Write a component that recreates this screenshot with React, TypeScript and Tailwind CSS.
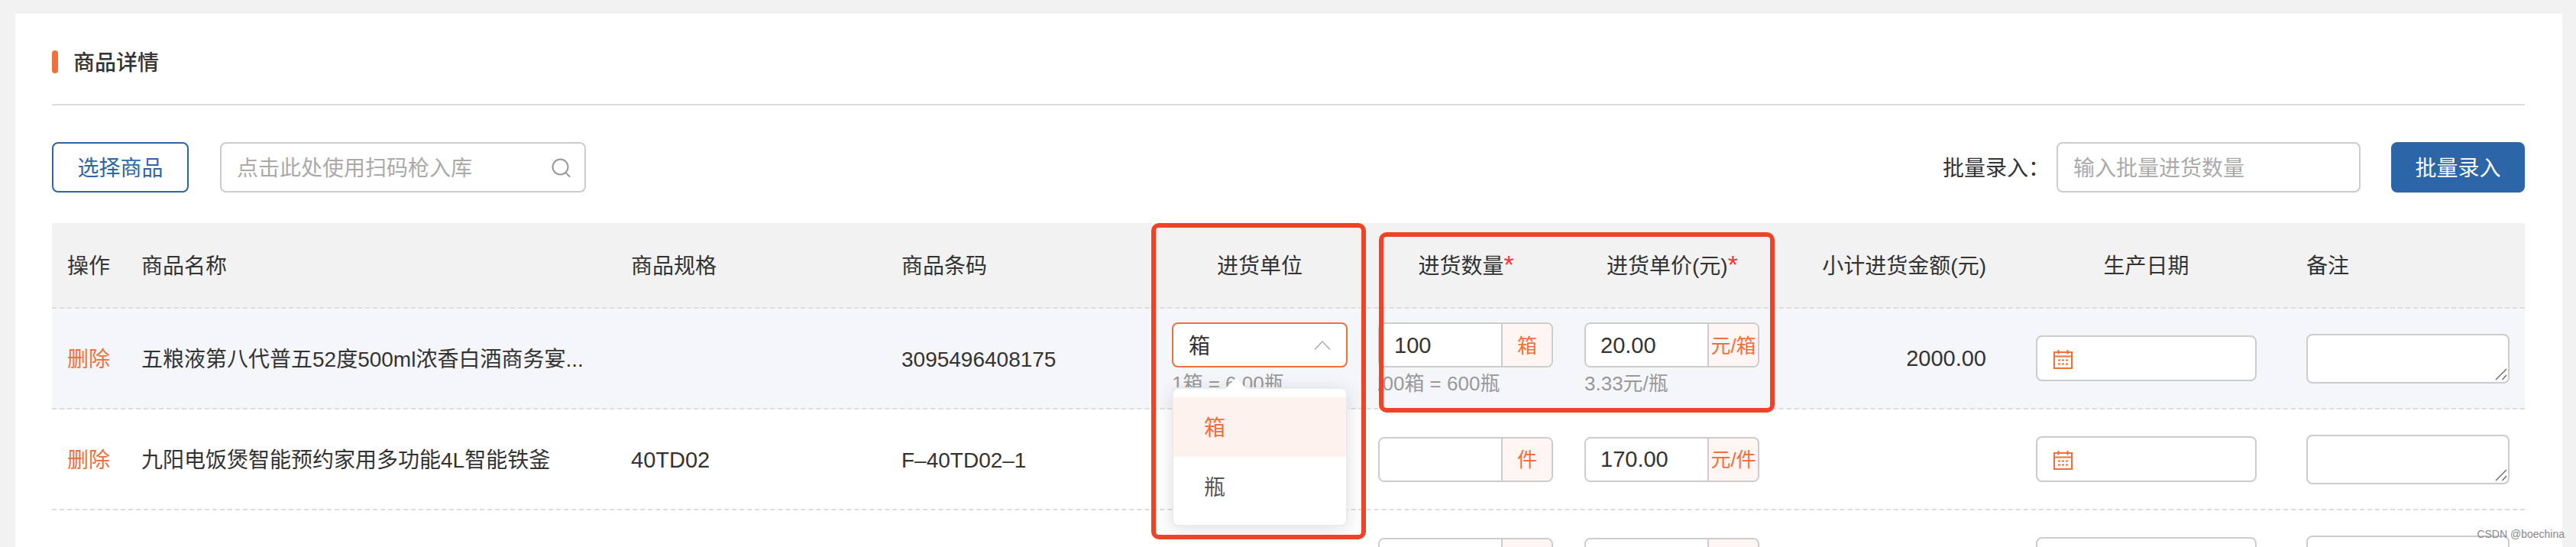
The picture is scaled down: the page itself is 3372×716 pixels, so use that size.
import React from 'react';

// shared column template for the header and every body row
const gridCols = 'grid grid-cols-[97px_641px_354px_354px_270px_270px_270px_296px_379px_306px]';

interface RowData {
  name?: string;
  spec?: string;
  barcode?: string;
  qty?: string;
  unit?: string;
  qtyHint?: string;
  price?: string;
  priceUnit?: string;
  priceHint?: string;
  subtotal?: string;
}

const rows: RowData[] = [
  {
    name: '五粮液第八代普五52度500ml浓香白酒商务宴...',
    barcode: '3095496408175',
    qty: '100',
    unit: '箱',
    qtyHint: '100箱 = 600瓶',
    price: '20.00',
    priceUnit: '元/箱',
    priceHint: '3.33元/瓶',
    subtotal: '2000.00',
  },
  {
    name: '九阳电饭煲智能预约家用多功能4L智能铁釜',
    spec: '40TD02',
    barcode: 'F–40TD02–1',
    unit: '件',
    price: '170.00',
    priceUnit: '元/件',
  },
  {},
];

const SearchIcon = () => (
  <svg width="25" height="25" viewBox="0 0 25 25" fill="none" stroke="#999" strokeWidth="2" strokeLinecap="round">
    <circle cx="11.5" cy="11.5" r="10" />
    <path d="M18.5 19l5 5" />
  </svg>
);

const CalendarIcon = () => (
  <svg width="26" height="25" viewBox="0 0 26 25" fill="none" stroke="#f0703a" strokeWidth="2">
    <rect x="1" y="3" width="23" height="21" />
    <path d="M1 8.5h23M6.500 0v5.500M18.500 0v5.500" />
    <path d="M6 13.500h3M11 13.500h3M16 13.500h3M6 18.500h3M11 18.500h3M16 18.500h3" strokeWidth="1.800" />
  </svg>
);

const AddonInput = ({ value, addon }: { value?: string; addon?: string }) => (
  <div className="flex h-[59px] w-[229px] overflow-hidden rounded-lg border-2 border-[#ccc] bg-white">
    <input
      readOnly
      value={value ?? ''}
      className="w-0 flex-1 bg-white pt-[2px] pl-[19px] text-[29px] text-[#333] outline-none"
    />
    <div className="flex w-[66px] items-center justify-center border-l-2 border-[#ccc] bg-[#fff6f3] pt-[3px] text-[26px] whitespace-nowrap text-[#f0703a]">
      {addon}
    </div>
  </div>
);

const Hint = ({ children }: { children: React.ReactNode }) => (
  <div className="mt-[7px] h-[28px] text-[26px] leading-[29px] whitespace-nowrap text-[#999]">{children}</div>
);

const UnitSelect = () => (
  <div className="relative">
    <div className="flex h-[59px] items-center justify-between rounded-lg border-2 border-[#f0703a] bg-white pr-[20px] pl-[20px] text-[28px] text-[#333]">
      <span className="pt-[4px]">箱</span>
      <svg width="22" height="12" viewBox="0 0 22 12" fill="none" stroke="#aaa" strokeWidth="1.500">
        <path d="M1 11.500L11 1l10 10.500" />
      </svg>
    </div>
    <Hint>1箱 = 6.00瓶</Hint>
    <div className="absolute top-[85px] left-0 z-10 w-full rounded-lg border-2 border-[#e8ebf0] bg-white py-[11px] text-[28px] shadow-[0_4px_24px_rgba(0,0,0,0.12)]">
      <div className="absolute -top-[10px] left-[72px] h-[20px] w-[20px] rotate-45 rounded-[2px] bg-white" />
      <div className="relative flex h-[78px] items-center bg-[#fdf2ee] pt-[3px] pl-[40px] text-[#f0703a]">箱</div>
      <div className="flex h-[78px] items-center pt-[3px] pl-[40px] text-[#555]">瓶</div>
    </div>
  </div>
);

const RemarkBox = () => (
  <div className="relative">
    <textarea readOnly className="block h-[65px] w-full resize-none rounded-lg border-2 border-[#ccc] bg-white outline-none" />
    <svg className="absolute right-[3px] bottom-[4px]" width="16" height="16" viewBox="0 0 16 16" fill="none" stroke="#666" strokeWidth="1.400">
      <path d="M1 15L15 1M9.500 15L15 9" />
    </svg>
  </div>
);

const TableRow = ({ row, index }: { row: RowData; index: number }) => (
  <div className={`${gridCols} h-[132px] items-center border-b-2 border-dashed border-[#ddd] ${index === 0 ? 'bg-[#f5f6fa]' : 'bg-white'}`}>
    <div className="px-5 pt-[4px] text-[#f0703a]">{row.name ? '删除' : ''}</div>
    <div className="px-5 pt-[4px] whitespace-nowrap">{row.name}</div>
    <div className="px-5 pt-[4px] text-[29px]">{row.spec}</div>
    <div className="px-5 pt-[4px]">{row.barcode}</div>
    <div className="px-5">{index === 0 && <UnitSelect />}</div>
    <div className="px-5">
      <AddonInput value={row.qty} addon={row.unit} />
      {row.qtyHint && (
        <div className="w-[229px] overflow-hidden">
          <div className="-ml-[9px]">
            <Hint>{row.qtyHint}</Hint>
          </div>
        </div>
      )}
    </div>
    <div className="px-5">
      <AddonInput value={row.price} addon={row.priceUnit} />
      {row.priceHint && <Hint>{row.priceHint}</Hint>}
    </div>
    <div className="px-5 pt-[2px] text-right text-[29px]">{row.subtotal}</div>
    <div className="flex justify-center">
      <div className="flex h-[60px] w-[289px] items-center rounded-lg border-2 border-[#ccc] bg-white pt-[3px] pl-[21px]">
        <CalendarIcon />
      </div>
    </div>
    <div className="px-5">
      <RemarkBox />
    </div>
  </div>
);

export default function App() {
  return (
    <div className="relative h-[716px] overflow-hidden bg-[#f2f2f2] pt-[18px] pr-[18px] pl-[20px] font-['Liberation_Sans','Noto_Sans_CJK_SC',sans-serif] text-[28px] text-[#333]">
      <div className="h-[800px] bg-white px-[48px] pt-[48px] pr-[49px]">
        {/* section title */}
        <div className="flex h-[30px] items-center gap-[20px] font-medium">
          <span className="h-[30px] w-[8px] rounded-full bg-[#f0703a]" />
          <span className="pt-[3px]">商品详情</span>
        </div>
        <div className="mt-[40px] h-[2px] bg-[#ddd]" />

        {/* toolbar */}
        <div className="mt-[48px] flex h-[66px] justify-between">
          <div className="flex gap-[41px]">
            <button className="w-[179px] rounded-lg border-2 border-[#2c66a8] pt-[3px] text-[#2c66a8]">选择商品</button>
            <div className="flex w-[479px] items-center justify-between rounded-lg border-2 border-[#ccc] pr-[18px] pl-[20px]">
              <input placeholder="点击此处使用扫码枪入库" className="w-[340px] pt-[3px] outline-none placeholder:text-[#aaa]" />
              <SearchIcon />
            </div>
          </div>
          <div className="flex items-center">
            <span className="mr-[9px] pt-[3px]">批量录入：</span>
            <input
              placeholder="输入批量进货数量"
              className="h-full w-[398px] rounded-lg border-2 border-[#ccc] pt-[3px] pl-[20px] outline-none placeholder:text-[#aaa]"
            />
            <button className="ml-[40px] h-full w-[175px] rounded-lg bg-[#2c66a8] pt-[3px] text-white">批量录入</button>
          </div>
        </div>

        {/* table */}
        <div className="relative mt-[40px]">
          <div className={`${gridCols} h-[112px] items-center border-b-2 border-dashed border-[#ddd] bg-[#f2f2f2] [&>div]:pt-[4px]`}>
            <div className="px-5">操作</div>
            <div className="px-5">商品名称</div>
            <div className="px-5">商品规格</div>
            <div className="px-5">商品条码</div>
            <div className="text-center">进货单位</div>
            <div className="text-center">
              进货数量<span className="text-[34px] leading-[20px] text-[#f33]">*</span>
            </div>
            <div className="text-center">
              进货单价(元)<span className="text-[34px] leading-[20px] text-[#f33]">*</span>
            </div>
            <div className="px-5 text-right">小计进货金额(元)</div>
            <div className="text-center">生产日期</div>
            <div className="px-5">备注</div>
          </div>
          {rows.map((row, i) => (
            <TableRow key={i} row={row} index={i} />
          ))}

          {/* red annotation frames drawn over the table */}
          <div className="pointer-events-none absolute top-0 left-[1439px] z-20 h-[414px] w-[281px] rounded-[10px] border-[6px] border-[#ee4327]" />
          <div className="pointer-events-none absolute top-[12px] left-[1737px] z-20 h-[236px] w-[518px] rounded-[10px] border-[6px] border-[#ee4327]" />
        </div>
      </div>

      <div className="absolute right-[15px] bottom-[6px] z-30 text-[14px] whitespace-nowrap text-[#888]">CSDN @boechina</div>
    </div>
  );
}
